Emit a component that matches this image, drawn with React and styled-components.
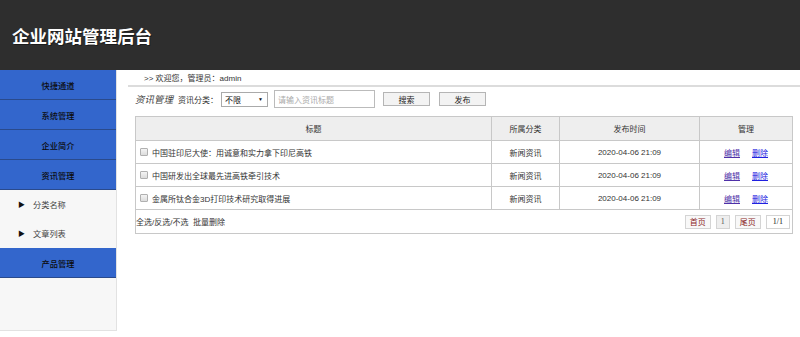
import React from "react";
import styled, { createGlobalStyle } from "styled-components";

const GlobalStyle = createGlobalStyle`
  body {
    margin: 0;
    background: #fff;
    font-family: "Liberation Sans", "Noto Sans CJK SC", sans-serif;
    font-size: 8px;
    color: #333;
  }
`;

const Header = styled.header`
  height: 70px;
  background: #2e2e2e;
  display: flex;
  align-items: center;
  padding-left: 12px;
  box-sizing: border-box;
`;

const Logo = styled.h1`
  margin: 0;
  color: #fff;
  font-family: "Noto Sans CJK SC", sans-serif;
  font-size: 17.5px;
  font-weight: 700;
  text-shadow: 1px 1px 0 rgba(0, 0, 0, 0.4);
`;

const Body = styled.div`
  display: flex;
  align-items: flex-start;
`;

const Sidebar = styled.nav`
  width: 117px;
  height: 261px;
  background: #f7f7f7;
  border-right: 1px solid #e2e2e2;
  border-bottom: 1px solid #e2e2e2;
  box-sizing: border-box;
  display: flex;
  flex-direction: column;
`;

const NavItem = styled.div`
  height: 30px;
  background: #3366cc;
  border-bottom: 1px solid #2a4a8c;
  box-sizing: border-box;
  display: flex;
  align-items: center;
  justify-content: center;
  color: #0c0c0c;
  font-size: 8.2px;
  font-weight: 500;
`;

const SubItem = styled.div`
  height: ${(p) => p.h}px;
  display: flex;
  align-items: center;
  padding-left: 18px;
  gap: 8px;
  color: #444;
  font-size: 8.2px;
`;

const Arrow = styled.span`
  font-size: 7px;
  color: #111;
`;

const Main = styled.main`
  flex: 1;
  padding-left: 11px;
`;

const Welcome = styled.div`
  height: 15px;
  border-bottom: 2px solid #dcdcdc;
  padding-left: 16px;
  display: flex;
  align-items: center;
  font-size: 8px;
  color: #333;
`;

const Section = styled.div`
  margin: 0 7px;
`;

const Toolbar = styled.div`
  height: 22px;
  margin-top: 1px;
  display: flex;
  align-items: center;
`;

const PageTitle = styled.span`
  font-family: "Noto Sans CJK SC", serif;
  font-style: italic;
  font-size: 9.5px;
  color: #444;
  margin-right: 5px;
`;

const Label = styled.span`
  font-size: 8px;
  margin-right: 3px;
`;

const Select = styled.div`
  width: 47px;
  height: 15px;
  border: 1px solid #aaa;
  box-sizing: border-box;
  display: flex;
  align-items: center;
  justify-content: space-between;
  padding: 0 4px 0 3px;
  font-size: 8px;
  color: #111;
  margin-right: 6px;
  &::after {
    content: "▼";
    font-size: 5px;
  }
`;

const Input = styled.div`
  width: 101px;
  height: 18px;
  border: 1px solid #bbb;
  box-sizing: border-box;
  display: flex;
  align-items: center;
  padding-left: 3px;
  font-size: 8px;
  color: #aaa;
  margin-right: 8px;
`;

const Button = styled.div`
  width: 47px;
  height: 14px;
  border: 1px solid #b5b5b5;
  background: #f3f3f3;
  box-sizing: border-box;
  display: flex;
  align-items: center;
  justify-content: center;
  font-size: 8px;
  color: #222;
  margin-right: 9px;
`;

const Table = styled.table`
  width: 658px;
  margin-top: 6px;
  border-collapse: collapse;
  border: 1px solid #c8c8c8;
  font-size: 8px;
  color: #333;
`;

const Th = styled.th`
  height: 23px;
  background: #eeeeee;
  border: 1px solid #c8c8c8;
  font-weight: normal;
  padding: 0;
  width: ${(p) => p.w || "auto"};
`;

const Td = styled.td`
  height: 22px;
  border: 1px solid #c8c8c8;
  padding: 0;
  text-align: ${(p) => (p.left ? "left" : "center")};
`;

const TitleCell = styled.div`
  display: flex;
  align-items: center;
  gap: 4px;
  padding-left: 4px;
`;

const Check = styled.span`
  width: 8px;
  height: 8px;
  border: 1px solid #b0b0b0;
  border-radius: 1px;
  background: linear-gradient(#f4f4f4, #dcdcdc);
  box-sizing: border-box;
`;

const Link = styled.a`
  color: ${(p) => (p.visited ? "#4f30a8" : "#2020e0")};
  text-decoration: underline;
  margin: 0 6px;
`;

const FootCell = styled.td`
  height: 23px;
  padding: 0;
`;

const Foot = styled.div`
  display: flex;
  align-items: center;
  justify-content: space-between;
  padding-right: 2px;
`;

const Pager = styled.div`
  display: flex;
  gap: 5px;
`;

const PageBtn = styled.span`
  height: 14px;
  padding: 0 ${(p) => p.pad || 4}px;
  border: 1px solid #d4d4d4;
  background: ${(p) => p.bg || "#f8f8f8"};
  color: ${(p) => p.color || "#8b1f1f"};
  box-sizing: border-box;
  display: flex;
  align-items: center;
  font-family: ${(p) => (p.serif ? '"Liberation Serif", serif' : "inherit")};
  font-size: 8px;
`;

const rows = [
  "中国驻印尼大使：用诚意和实力拿下印尼高铁",
  "中国研发出全球最先进高铁牵引技术",
  "金属所钛合金3D打印技术研究取得进展",
];

export default function App() {
  return (
    <>
      <GlobalStyle />
      <Header>
        <Logo>企业网站管理后台</Logo>
      </Header>
      <Body>
        <Sidebar>
          <NavItem>快捷通道</NavItem>
          <NavItem>系统管理</NavItem>
          <NavItem>企业简介</NavItem>
          <NavItem>资讯管理</NavItem>
          <SubItem h={28}>
            <Arrow>▶</Arrow>分类名称
          </SubItem>
          <SubItem h={30}>
            <Arrow>▶</Arrow>文章列表
          </SubItem>
          <NavItem>产品管理</NavItem>
        </Sidebar>
        <Main>
          <Welcome>&gt;&gt; 欢迎您，管理员：admin</Welcome>
          <Section>
            <Toolbar>
              <PageTitle>资讯管理</PageTitle>
              <Label>资讯分类：</Label>
              <Select>不限</Select>
              <Input>请输入资讯标题</Input>
              <Button>搜索</Button>
              <Button>发布</Button>
            </Toolbar>
            <Table>
              <thead>
                <tr>
                  <Th>标题</Th>
                  <Th w="67px">所属分类</Th>
                  <Th w="139px">发布时间</Th>
                  <Th w="92px">管理</Th>
                </tr>
              </thead>
              <tbody>
                {rows.map((t) => (
                  <tr key={t}>
                    <Td left>
                      <TitleCell>
                        <Check />
                        {t}
                      </TitleCell>
                    </Td>
                    <Td>新闻资讯</Td>
                    <Td>2020-04-06 21:09</Td>
                    <Td>
                      <Link visited>编辑</Link>
                      <Link>删除</Link>
                    </Td>
                  </tr>
                ))}
                <tr>
                  <FootCell colSpan={4}>
                    <Foot>
                      <span>全选/反选/不选&nbsp;&nbsp;批量删除</span>
                      <Pager>
                        <PageBtn>首页</PageBtn>
                        <PageBtn bg="#eee" color="#555" serif pad={4}>1</PageBtn>
                        <PageBtn>尾页</PageBtn>
                        <PageBtn bg="#fff" color="#222" serif pad={6}>1/1</PageBtn>
                      </Pager>
                    </Foot>
                  </FootCell>
                </tr>
              </tbody>
            </Table>
          </Section>
        </Main>
      </Body>
    </>
  );
}
